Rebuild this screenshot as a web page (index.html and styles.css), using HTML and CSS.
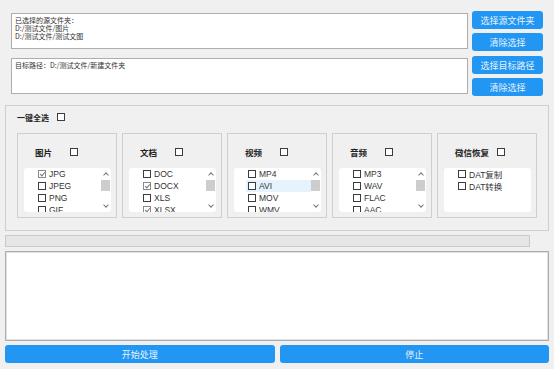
FILE: index.html
```html
<!DOCTYPE html>
<html>
<head>
    <meta charset="utf-8">
    <title>文件整理工具</title>
    <link rel="stylesheet" href="styles.css">
</head>
<body>
    <div class="app">
        <div class="path-row">
            <div class="path-box">
                <div class="path-line">已选择的源文件夹：</div>
                <div class="path-line">D:/测试文件/图片</div>
                <div class="path-line">D:/测试文件/测试文图</div>
            </div>
            <div class="btn-col">
                <button class="btn">选择源文件夹</button>
                <button class="btn">清除选择</button>
            </div>
        </div>
        <div class="path-row">
            <div class="path-box">
                <div class="path-line">目标路径：D:/测试文件/新建文件夹</div>
            </div>
            <div class="btn-col">
                <button class="btn">选择目标路径</button>
                <button class="btn">清除选择</button>
            </div>
        </div>

        <div class="group">
            <div class="all-row">
                <span class="all-label">一键全选</span>
                <span class="box"></span>
            </div>
            <div class="types">
                <div class="type">
                    <div class="type-head"><span class="type-title">图片</span><span class="box"></span></div>
                    <div class="list">
                        <div class="items">
                            <div class="item"><span class="box checked"></span>JPG</div>
                            <div class="item"><span class="box"></span>JPEG</div>
                            <div class="item"><span class="box"></span>PNG</div>
                            <div class="item"><span class="box"></span>GIF</div>
                        </div>
                        <div class="scroll"><span class="arrow up"></span><span class="thumb"></span><span class="arrow down"></span></div>
                    </div>
                </div>
                <div class="type">
                    <div class="type-head"><span class="type-title">文档</span><span class="box"></span></div>
                    <div class="list">
                        <div class="items">
                            <div class="item"><span class="box"></span>DOC</div>
                            <div class="item"><span class="box checked"></span>DOCX</div>
                            <div class="item"><span class="box"></span>XLS</div>
                            <div class="item"><span class="box checked"></span>XLSX</div>
                        </div>
                        <div class="scroll"><span class="arrow up"></span><span class="thumb"></span><span class="arrow down"></span></div>
                    </div>
                </div>
                <div class="type">
                    <div class="type-head"><span class="type-title">视频</span><span class="box"></span></div>
                    <div class="list">
                        <div class="items">
                            <div class="item"><span class="box"></span>MP4</div>
                            <div class="item hover"><span class="box"></span>AVI</div>
                            <div class="item"><span class="box"></span>MOV</div>
                            <div class="item"><span class="box"></span>WMV</div>
                        </div>
                        <div class="scroll"><span class="arrow up"></span><span class="thumb"></span><span class="arrow down"></span></div>
                    </div>
                </div>
                <div class="type">
                    <div class="type-head"><span class="type-title">音频</span><span class="box"></span></div>
                    <div class="list">
                        <div class="items">
                            <div class="item"><span class="box"></span>MP3</div>
                            <div class="item"><span class="box"></span>WAV</div>
                            <div class="item"><span class="box"></span>FLAC</div>
                            <div class="item"><span class="box"></span>AAC</div>
                        </div>
                        <div class="scroll"><span class="arrow up"></span><span class="thumb"></span><span class="arrow down"></span></div>
                    </div>
                </div>
                <div class="type">
                    <div class="type-head"><span class="type-title wide">微信恢复</span><span class="box"></span></div>
                    <div class="list">
                        <div class="items">
                            <div class="item"><span class="box"></span>DAT复制</div>
                            <div class="item"><span class="box"></span>DAT转换</div>
                        </div>
                    </div>
                </div>
            </div>
        </div>

        <div class="progress"></div>
        <div class="log"></div>

        <div class="actions">
            <button class="btn">开始处理</button>
            <button class="btn">停止</button>
        </div>
    </div>
</body>
</html>
```

FILE: styles.css
```css
body
{
    margin: 0;
    background-color: #f0f0f0;
    font-family: "Liberation Sans", "Noto Sans CJK SC", sans-serif;
    color: #222;
}
.app
{
    width: 554px;
    height: 369px;
    padding: 11px 5px 0 5px;
    box-sizing: border-box;
    display: flex;
    flex-direction: column;
}
.path-row
{
    display: flex;
    align-items: center;
    gap: 4px;
    padding-left: 6px;
    margin-bottom: 5px;
}
.path-box
{
    width: 457px;
    height: 36px;
    box-sizing: border-box;
    background-color: white;
    border: 1px solid #adadad;
    padding: 2px 3px;
    font-family: "Noto Sans CJK SC", sans-serif;
    font-size: 7px;
    color: #333;
}
.path-line
{
    height: 8px;
    line-height: 8px;
    white-space: nowrap;
}
.btn-col
{
    display: flex;
    flex-direction: column;
    gap: 4px;
}
.btn
{
    width: 71px;
    height: 18px;
    padding: 0;
    margin: 0;
    border: none;
    border-radius: 3px;
    background-color: #2196f3;
    color: #e8f2fd;
    font-family: "Noto Sans CJK SC", sans-serif;
    font-size: 9px;
}
.group
{
    margin-top: 4px;
    height: 126px;
    box-sizing: border-box;
    border: 1px solid #cfcfcf;
    padding: 7px 11px 0 11px;
}
.all-row
{
    display: flex;
    align-items: center;
    height: 8px;
    gap: 8px;
}
.all-label, .type-title
{
    font-family: "Noto Sans CJK SC", sans-serif;
    font-size: 8px;
    font-weight: bold;
    color: #222;
}
.types
{
    display: flex;
    gap: 5px;
    margin-top: 12px;
}
.type
{
    width: 100px;
    height: 85px;
    box-sizing: border-box;
    border: 1px solid #cfcfcf;
    padding: 13px 5px 0 6px;
}
.type-head
{
    display: flex;
    align-items: center;
    height: 10px;
    padding-left: 11px;
    margin-bottom: 11px;
}
.type-title
{
    min-width: 35px;
    font-size: 8.5px;
}
.type-title.wide
{
    margin-right: 7px;
}
.box
{
    display: inline-block;
    width: 8px;
    height: 8px;
    box-sizing: border-box;
    border: 1px solid #3c3c3c;
    background-color: white;
    position: relative;
    flex-shrink: 0;
}
.box.checked
{
    border-color: #8a8a8a;
}
.box.checked::after
{
    content: "";
    position: absolute;
    left: 1.5px;
    top: -0.5px;
    width: 2px;
    height: 4px;
    border-right: 1px solid #777;
    border-bottom: 1px solid #777;
    transform: rotate(40deg);
}
.list
{
    height: 44px;
    background-color: white;
    border-radius: 3px;
    display: flex;
    overflow: hidden;
}
.items
{
    flex: 1;
    padding-left: 12px;
}
.item
{
    height: 12px;
    display: flex;
    align-items: center;
    gap: 3px;
    padding-left: 2px;
    font-size: 8.5px;
    color: #333;
}
.item.hover
{
    background-color: #e5f3ff;
}
.scroll
{
    width: 9px;
    margin-right: 1px;
    display: flex;
    flex-direction: column;
    align-items: center;
}
.arrow
{
    width: 3px;
    height: 3px;
    border-left: 1px solid #777;
    border-top: 1px solid #777;
    margin: 4px 0 3px 0;
}
.arrow.up
{
    transform: rotate(45deg);
    margin-top: 5px;
}
.arrow.down
{
    transform: rotate(225deg);
    margin-top: auto;
    margin-bottom: 5px;
}
.thumb
{
    width: 9px;
    height: 11px;
    background-color: #cdcdcd;
}
.progress
{
    margin-top: 4px;
    width: 525px;
    height: 12px;
    box-sizing: border-box;
    background-color: #e6e6e6;
    border: 1px solid #c9c9c9;
}
.log
{
    margin-top: 4px;
    height: 90px;
    box-sizing: border-box;
    background-color: white;
    border: 1px solid #adadad;
    box-shadow: inset 0 0 0 1px #e0e0e0;
}
.actions
{
    display: flex;
    gap: 5px;
    margin-top: 4px;
}
.actions .btn
{
    flex: 1;
    height: 18px;
}
```
